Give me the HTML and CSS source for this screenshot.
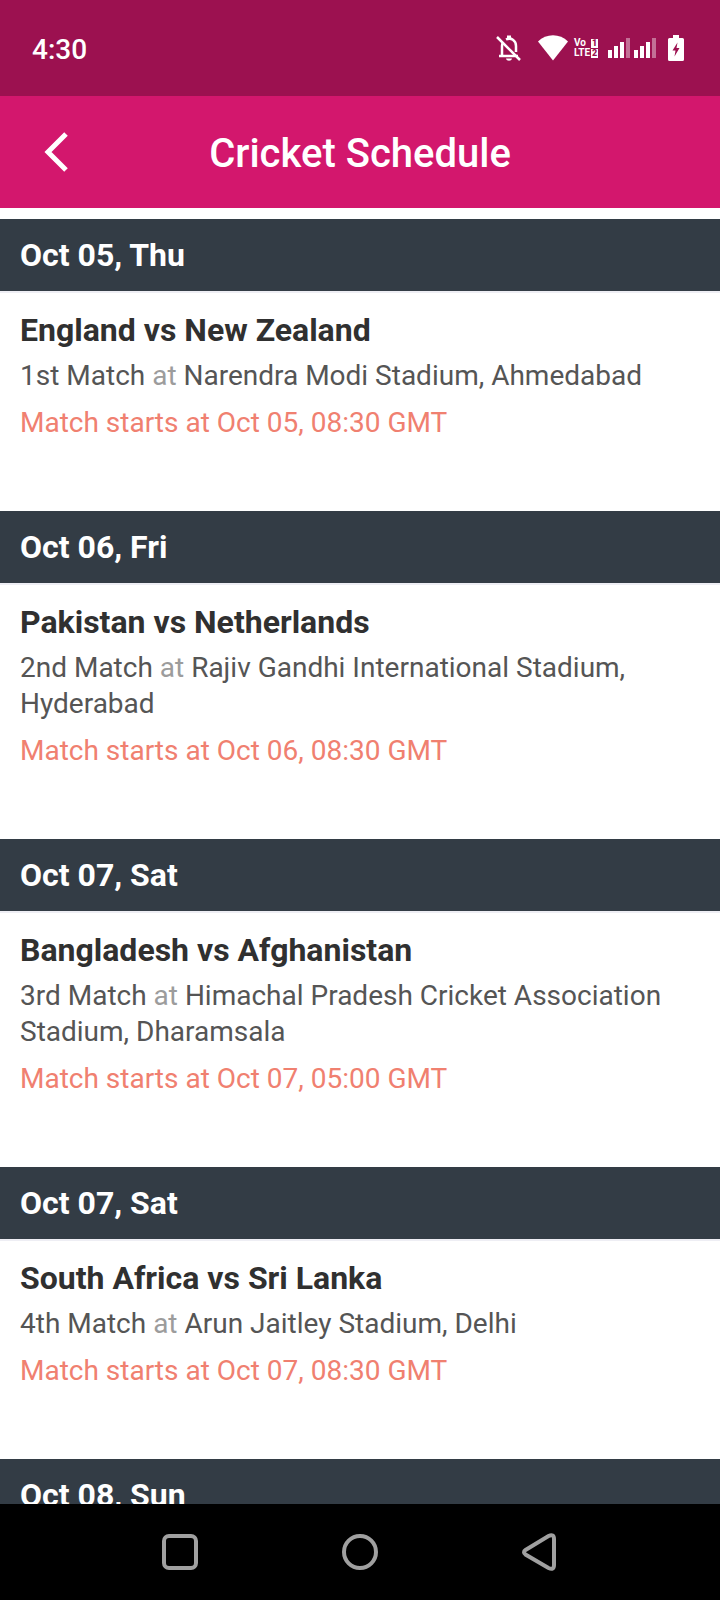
FILE: index.html
```html
<!DOCTYPE html>
<html lang="en">
<head>
  <meta charset="UTF-8" />
  <meta name="viewport" content="width=device-width, initial-scale=1.0" />
  <title>Cricket Schedule</title>
  <link rel="stylesheet" href="styles.css">
</head>
<body>
  <div class="status-bar">
    <span class="clock">4:30</span>
    <div class="status-icons">
      <svg class="bell" width="26" height="28" viewBox="0 0 26 28" fill="none" stroke="#fff" stroke-width="2.500">
        <path d="M3 22h19M6 22V12c0-1.500.3-2.500 1-3.500M10 5.500c5-2.500 10 1 10 6.500v6" />
        <path d="M11 1.500h4v3h-4z" fill="#fff" stroke="none" />
        <path d="M10 24.500h6c-.5 3-5.500 3-6 0z" fill="#fff" stroke="none" />
        <path d="M1 3L24 26" />
      </svg>
      <svg class="wifi" width="30" height="26" viewBox="0 0 30 26" fill="#fff">
        <path d="M15 25.500L0 6.500C8-2 22-2 30 6.500z" />
      </svg>
      <div class="volte">
        <span>Vo<b>1</b></span>
        <span>LTE<b>2</b></span>
      </div>
      <svg class="signal" width="50" height="20" viewBox="0 0 50 20" fill="#fff">
        <path d="M0 12h4v8H0zM6 8h4v12H6zM12 4h4v16h-4z" />
        <path d="M18 0h4v20h-4z" opacity=".4" />
        <path d="M26 12h4v8h-4zM32 8h4v12h-4zM38 4h4v16h-4z" />
        <path d="M44 0h4v20h-4z" opacity=".4" />
      </svg>
      <svg class="battery" width="16" height="26" viewBox="0 0 16 26">
        <path d="M5 0h6v3h3.500q1.500 0 1.500 1.500v20q0 1.500-1.500 1.500h-13Q0 26 0 24.500v-20Q0 3 1.500 3H5z" fill="#fff" />
        <path d="M9.500 7.500L4.500 15.500h3L6.500 21.500l5-8.500h-3z" fill="#9c1150" />
      </svg>
    </div>
  </div>

  <header class="app-bar">
    <button class="back-btn" type="button" aria-label="Back">
      <svg width="24" height="40" viewBox="0 0 24 40" fill="none" stroke="#fff" stroke-width="5">
        <path d="M22 2L4 20L22 38" />
      </svg>
    </button>
    <h1>Cricket Schedule</h1>
  </header>

  <main class="schedule">
    <section class="match">
      <h2>Oct 05, Thu</h2>
      <div class="match-info">
        <h3>England vs New Zealand</h3>
        <p class="venue">1st Match <span>at</span> Narendra Modi Stadium, Ahmedabad</p>
        <p class="start">Match starts at Oct 05, 08:30 GMT</p>
      </div>
    </section>
    <section class="match">
      <h2>Oct 06, Fri</h2>
      <div class="match-info">
        <h3>Pakistan vs Netherlands</h3>
        <p class="venue">2nd Match <span>at</span> Rajiv Gandhi International Stadium, Hyderabad</p>
        <p class="start">Match starts at Oct 06, 08:30 GMT</p>
      </div>
    </section>
    <section class="match">
      <h2>Oct 07, Sat</h2>
      <div class="match-info">
        <h3>Bangladesh vs Afghanistan</h3>
        <p class="venue">3rd Match <span>at</span> Himachal Pradesh Cricket Association Stadium, Dharamsala</p>
        <p class="start">Match starts at Oct 07, 05:00 GMT</p>
      </div>
    </section>
    <section class="match">
      <h2>Oct 07, Sat</h2>
      <div class="match-info">
        <h3>South Africa vs Sri Lanka</h3>
        <p class="venue">4th Match <span>at</span> Arun Jaitley Stadium, Delhi</p>
        <p class="start">Match starts at Oct 07, 08:30 GMT</p>
      </div>
    </section>
    <section class="match">
      <h2>Oct 08, Sun</h2>
    </section>
  </main>

  <nav class="nav-bar">
    <button type="button" aria-label="Recent apps">
      <svg width="40" height="40" viewBox="0 0 40 40">
        <rect x="4" y="4" width="32" height="32" rx="5" />
      </svg>
    </button>
    <button type="button" aria-label="Home">
      <svg width="40" height="40" viewBox="0 0 40 40">
        <circle cx="20" cy="20" r="16" />
      </svg>
    </button>
    <button type="button" aria-label="Back">
      <svg width="40" height="40" viewBox="0 0 40 40">
        <path d="M5.500 18L28.500 4Q34 1.500 34 7V33Q34 38.500 28.500 36L5.500 22.500Q2.500 20 5.500 18z" />
      </svg>
    </button>
  </nav>
</body>
</html>
```
FILE: styles.css
```css
* {
  box-sizing: border-box;
}

body {
  margin: 0;
  height: 100vh;
  display: flex;
  flex-direction: column;
  overflow: hidden;
  font-family: Roboto, sans-serif;
  background: #fff;
}

h1, h2, h3, p {
  margin: 0;
}

button {
  padding: 0;
  border: none;
  background: none;
  cursor: pointer;
}

svg {
  display: block;
}

.status-bar {
  flex: none;
  height: 96px;
  padding: 0 36px 0 32px;
  display: flex;
  align-items: center;
  justify-content: space-between;
  background: #9c1150;
  color: #fff;
}

.clock {
  padding-top: 4px;
  font-size: 28px;
  font-weight: 500;
  line-height: 36px;
}

.status-icons {
  display: flex;
  align-items: center;
}

.wifi {
  margin-left: 16px;
}

.volte {
  width: 24px;
  margin: 0 10px 0 6px;
  font-size: 10px;
  font-weight: 700;
  line-height: 10px;
}

.volte span {
  display: flex;
  align-items: center;
  justify-content: space-between;
}

.volte b {
  width: 7px;
  background: #fff;
  color: #9c1150;
  font-size: 9px;
  line-height: 9px;
  text-align: center;
}

.battery {
  margin-left: 10px;
}

.app-bar {
  flex: none;
  height: 112px;
  padding: 0 44px;
  display: grid;
  grid-template-columns: 24px 1fr 24px;
  align-items: center;
  background: #d3176d;
  color: #fff;
}

.app-bar h1 {
  padding-top: 4px;
  font-size: 40px;
  font-weight: 500;
  line-height: 48px;
  text-align: center;
}

.schedule {
  flex: 1;
  min-height: 0;
  padding-top: 11px;
  overflow-y: auto;
  scrollbar-width: none;
}

.match h2 {
  padding: 0 20px;
  font-size: 32px;
  font-weight: 700;
  line-height: 72px;
  background: #333c45;
  color: #fff;
}

.match-info {
  padding: 18px 20px 70px;
  border-top: 2px solid #eeeef4;
}

.match-info h3 {
  font-size: 32px;
  font-weight: 700;
  line-height: 38px;
  color: #303030;
}

.venue,
.start {
  font-size: 28px;
  line-height: 36px;
}

.venue {
  margin-top: 9px;
  color: #555;
}

.venue span {
  color: #9c9c9c;
}

.start {
  margin-top: 11px;
  color: #f08070;
}

.nav-bar {
  flex: none;
  height: 96px;
  padding: 0 12.5%;
  display: grid;
  grid-template-columns: repeat(3, 1fr);
  background: #000;
}

.nav-bar button {
  display: flex;
  align-items: center;
  justify-content: center;
}

.nav-bar svg {
  fill: none;
  stroke: #a0a0a0;
  stroke-width: 4;
}
```
